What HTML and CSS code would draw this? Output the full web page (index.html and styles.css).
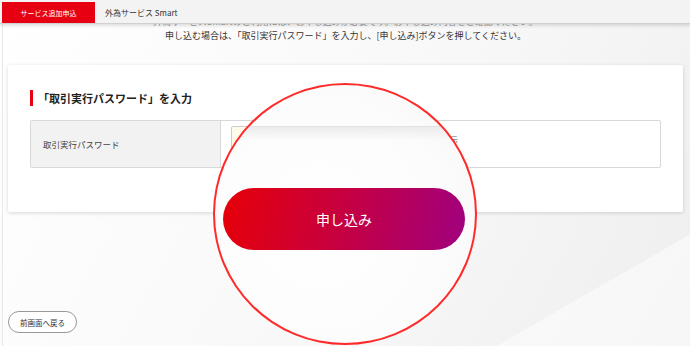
FILE: index.html
```html
<!DOCTYPE html>
<html lang="ja">
<head>
    <meta charset="UTF-8">
    <title>サービス追加申込</title>
    <link rel="stylesheet" href="styles.css">
</head>
<body>

    <!-- Tabs -->
    <div class="tabs">
        <div class="tab active">サービス追加申込</div>
        <div class="tab">外為サービス Smart</div>
    </div>

    <div class="main">
        <div class="clip"><span>外為サービスSmartのご利用には、お申し込みが必要です。お申し込み内容をご確認ください。</span></div>
        <p class="note">申し込む場合は、「取引実行パスワード」を入力し、[申し込み]ボタンを押してください。</p>

        <!-- Password card -->
        <div class="card">
            <h2 class="heading">「取引実行パスワード」を入力</h2>
            <div class="row">
                <div class="label">取引実行パスワード</div>
                <div class="field">
                    <input class="pw" type="password">
                    <span class="show">パスワードを表示</span>
                </div>
            </div>
        </div>

        <button class="back">前画面へ戻る</button>
    </div>

    <!-- Magnifier over the submit button -->
    <div class="lens">
        <div class="lens-edge"></div>
        <button class="submit">申し込み</button>
    </div>

</body>
</html>
```

FILE: styles.css
```css
/* General */
body {
    margin: 0;
    width: 690px;
    height: 346px;
    overflow: hidden;
    position: relative;
    font-family: "Noto Sans CJK JP", "Noto Sans", sans-serif;
    color: #333;
    background:
        linear-gradient(150deg, transparent 85%, rgba(255,255,255,0.5) 85%),
        linear-gradient(120deg, #ffffff 0%, #f8f8f8 55%, #eeeeee 100%);
}

/* Tabs */
.tabs {
    display: flex;
    height: 21px;
    padding: 2px 0 0 2px;
    background: #f3f3f3;
    border-bottom: 1px solid #d0d0d0;
    box-shadow: 0 2px 3px rgba(0,0,0,0.12);
    position: relative;
    z-index: 1;
}

.tab {
    display: flex;
    align-items: center;
    padding: 0 10px;
    font-size: 8px;
    color: #333;
}

.tab.active {
    width: 93px;
    padding: 0;
    justify-content: center;
    background: #e60012;
    color: #fff;
    font-size: 7px;
}

/* Main area */
.main {
    margin-left: 2px;
    border-left: 1px solid #e8e8e8;
    padding: 0 7px 0 5px;
    height: 322px;
}

.clip {
    height: 4px;
    overflow: hidden;
    text-align: center;
    font-size: 9px;
    color: #999;
}

.clip span {
    display: block;
    margin-top: -7px;
    line-height: 10px;
}

.note {
    margin: 1px 0 0;
    text-align: center;
    font-size: 9px;
    line-height: 14px;
    color: #333;
}

/* Card */
.card {
    margin-top: 22px;
    width: 631px;
    padding: 25px 22px 44px;
    background: #fff;
    border-radius: 2px;
    box-shadow: 0 1px 4px rgba(0,0,0,0.15);
}

.heading {
    margin: 0 0 14px;
    height: 16px;
    padding-left: 5px;
    border-left: 3px solid #e60012;
    font-size: 11px;
    line-height: 16px;
    font-weight: bold;
    color: #222;
}

.row {
    display: flex;
    height: 46px;
    border: 1px solid #d8d8d8;
    border-radius: 2px;
}

.label {
    width: 177px;
    padding-left: 12px;
    display: flex;
    align-items: center;
    background: #f2f2f2;
    border-right: 1px solid #d8d8d8;
    font-size: 8.5px;
    color: #444;
}

.field {
    flex: 1;
    display: flex;
    align-items: flex-start;
    gap: 6px;
    padding: 5px 10px;
}

.pw {
    width: 157px;
    height: 28px;
    box-sizing: border-box;
    background: #fffbea;
    border: 1px solid #ccc;
    border-radius: 2px;
}

.show {
    font-size: 8px;
    margin-top: 8px;
    color: #666;
}

/* Back button */
.back {
    display: block;
    margin-top: 99px;
    width: 69px;
    height: 22px;
    padding: 0;
    background: #fff;
    border: 1px solid #999;
    border-radius: 11px;
    font-family: inherit;
    font-size: 7.5px;
    color: #333;
}

/* Magnifier lens */
.lens {
    position: absolute;
    left: 213px;
    top: 83px;
    width: 260px;
    height: 258px;
    border: 2px solid #ff2a2a;
    border-radius: 50%;
    overflow: hidden;
    z-index: 2;
    background: radial-gradient(circle at 40% 55%, #ffffff 0%, #fcfcfc 60%, #f5f5f5 100%);
}

.lens-edge {
    margin-top: 41px;
    height: 14px;
    border-top: 1px solid #e2e2e2;
    background: linear-gradient(#ececec, rgba(255,255,255,0));
}

.submit {
    display: block;
    margin: 47px 0 0 8px;
    width: 242px;
    height: 62px;
    border: none;
    border-radius: 31px;
    background: linear-gradient(100deg, #e60008 0%, #c9003c 45%, #a0007f 100%);
    color: #fff;
    font-family: inherit;
    font-size: 14px;
}
```
